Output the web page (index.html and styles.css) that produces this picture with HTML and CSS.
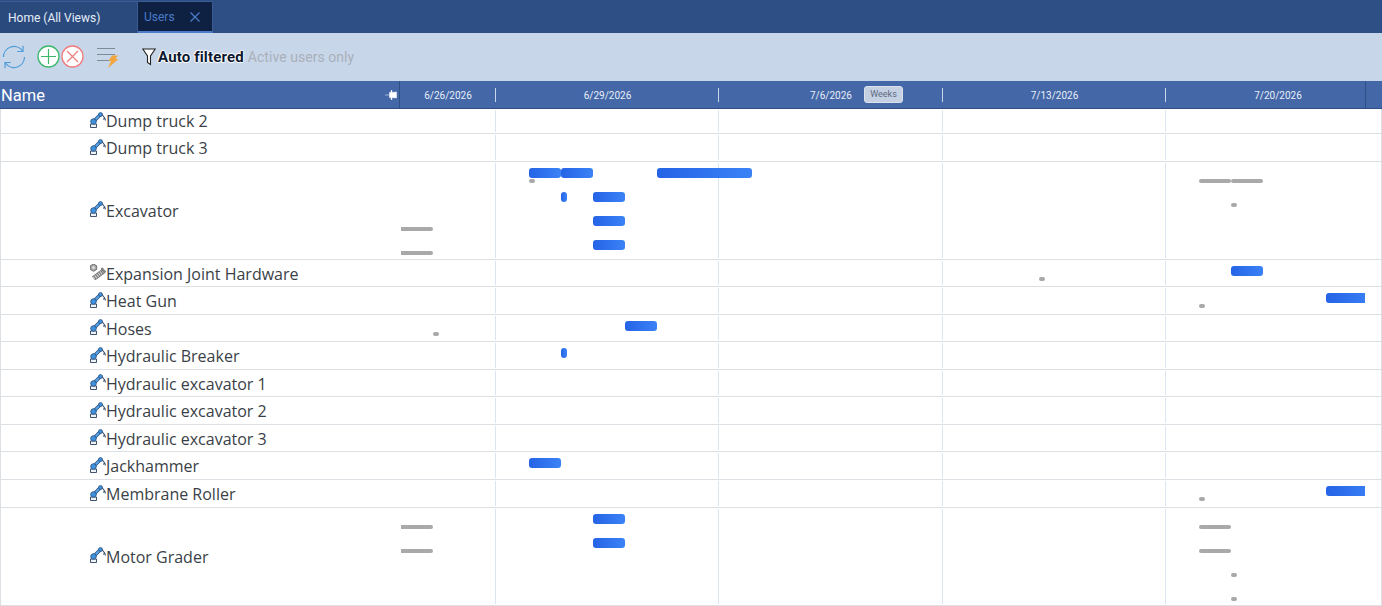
FILE: index.html
```html
<!DOCTYPE html>
<html lang="en">
<head>
    <meta charset="UTF-8">
    <title>Users</title>
    <link rel="stylesheet" href="styles.css">
</head>
<body>
    <svg class="sprites" width="0" height="0">
        <symbol id="arm" viewBox="0 0 16 16">
            <!-- base -->
            <path d="M.5 15.500v-3.500h6v3.500z" fill="#eef3f8" stroke="#2b3f5c" stroke-width=".9"/>
            <!-- arm links, dark outline under a blue fill -->
            <path d="M3.500 9.500L10.500 2.500" fill="none" stroke="#2a4a78" stroke-width="3.400"/>
            <path d="M3.500 9.500L10.500 2.500" fill="none" stroke="#55a5ea" stroke-width="2"/>
            <circle cx="3.500" cy="9.500" r="2.800" fill="#3f93de" stroke="#2a4a78" stroke-width=".8"/>
            <circle cx="10.500" cy="2.500" r="2" fill="#3f93de" stroke="#2a4a78" stroke-width=".7"/>
            <!-- gripper -->
            <path d="M12 2.500l3 4M15 6.500l-2 .8M15 6.500l.4 2" fill="none" stroke="#3a4f6c" stroke-width="1.100"/>
        </symbol>
        <symbol id="bolt" viewBox="0 0 16 16">
            <path d="M3.500 0l3.200 1.800v3.700l-3.200 1.800L.3 5.500V1.800z" fill="#a8a8a8" stroke="#5b5b5b" stroke-width=".8"/>
            <circle cx="3.500" cy="3.600" r="1.200" fill="#eee"/>
            <path d="M3.500 14.500L13 7.500" fill="none" stroke="#6a6a6a" stroke-width="5"/>
            <path d="M3.500 14.500L13 7.500" fill="none" stroke="#cfcfcf" stroke-width="3.600" stroke-dasharray="1.300 .9"/>
            <path d="M11 5l3.500 4 1.300-1.200-3.500-4z" fill="#8b8b8b" stroke="#5b5b5b" stroke-width=".7"/>
        </symbol>
    </svg>

    <div class="tabs">
        <div class="tab">Home (All Views)</div>
        <div class="tab active">
            <span>Users</span>
            <svg class="tab-close" width="12" height="12" viewBox="0 0 12 12"><path d="M1.500 1.500l9 9M10.500 1.500l-9 9" stroke="#4a7cc9" stroke-width="1.200" fill="none"/></svg>
        </div>
    </div>

    <div class="toolbar">
        <svg class="tool-refresh" width="24" height="24" viewBox="0 0 24 24" fill="none" stroke="#4d9bd8" stroke-width="1.200">
            <path d="M1.500 12A10.500 10.500 0 0 1 20.500 5.800M22.500 12A10.500 10.500 0 0 1 3.500 18.200"/>
            <path d="M21 .8v5.700h-5.700M3 23.200v-5.700h5.700"/>
        </svg>
        <svg class="tool-add" width="23" height="23" viewBox="0 0 23 23" fill="#fff">
            <circle cx="11.500" cy="11.500" r="10.500" stroke="#3cb86c" stroke-width="1.300"/>
            <path d="M11.500 4v15M4 11.500h15" stroke="#3cb86c" stroke-width="1.200"/>
        </svg>
        <svg class="tool-remove" width="23" height="23" viewBox="0 0 23 23" fill="#fff">
            <circle cx="11.500" cy="11.500" r="10.500" stroke="#ef7d7d" stroke-width="1.300"/>
            <path d="M6 6l11 11M17 6L6 17" stroke="#ef7d7d" stroke-width="1.200"/>
        </svg>
        <svg class="tool-rules" width="24" height="22" viewBox="0 0 24 22" fill="none">
            <path d="M1 1.500h18M1 7.500h18M1 13.500h12" stroke="#7f8a99" stroke-width="1.200"/>
            <path d="M16 8.500h6l-2.500 3.500h3L12 21l3-7h-2.500z" fill="#f0a63c"/>
        </svg>
        <svg class="tool-filter" width="14" height="18" viewBox="0 0 14 18">
            <path d="M.8 1h12.400L8.500 8v8.500l-3-2V8z" fill="#fff" stroke="#222" stroke-width="1.100"/>
        </svg>
        <span class="filter-label">Auto filtered</span>
        <span class="filter-note">Active users only</span>
    </div>

    <div class="gantt">
        <div class="gantt-head">
            <div class="head-name">
                <span>Name</span>
                <svg class="pin" width="12" height="10" viewBox="0 0 12 10"><path d="M0 5h4.500M4.500 2.500H6V.5h1v2l4.500-.5v6L7 7.500v2H6v-2H4.500z" fill="#fff" stroke="#fff" stroke-width=".5"/></svg>
            </div>
            <div class="head-dates">
                <div class="date date-first">6/26/2026</div>
                <div class="date date-a">6/29/2026</div>
                <div class="date date-b">7/6/2026<span class="zoom-badge">Weeks</span></div>
                <div class="date date-a">7/13/2026</div>
                <div class="date date-b date-last">7/20/2026</div>
            </div>
            <div class="head-end"></div>
        </div>

        <div class="row"><div class="name"><svg class="res-icon"><use href="#arm"/></svg>Dump truck 2</div><div class="chart"></div></div>
        <div class="row"><div class="name"><svg class="res-icon"><use href="#arm"/></svg>Dump truck 3</div><div class="chart"></div></div>
        <div class="row row-tall">
            <div class="name"><svg class="res-icon"><use href="#arm"/></svg>Excavator</div>
            <div class="chart">
                <i class="bar" style="left:129px;top:6px;width:32px"></i>
                <i class="bar" style="left:161px;top:6px;width:32px"></i>
                <i class="bar" style="left:257px;top:6px;width:95px"></i>
                <i class="dot" style="left:129px;top:17px"></i>
                <i class="bar" style="left:161px;top:30px;width:6px"></i>
                <i class="bar" style="left:193px;top:30px;width:32px"></i>
                <i class="bar" style="left:193px;top:54px;width:32px"></i>
                <i class="bar" style="left:193px;top:78px;width:32px"></i>
                <i class="line" style="left:1px;top:65px"></i>
                <i class="line" style="left:1px;top:89px"></i>
                <i class="line round" style="left:799px;top:17px"></i>
                <i class="line round" style="left:831px;top:17px"></i>
                <i class="dot" style="left:831px;top:41px"></i>
            </div>
        </div>
        <div class="row">
            <div class="name"><svg class="res-icon"><use href="#bolt"/></svg>Expansion Joint Hardware</div>
            <div class="chart">
                <i class="bar" style="left:831px;top:6px;width:32px"></i>
                <i class="dot" style="left:639px;top:17px"></i>
            </div>
        </div>
        <div class="row">
            <div class="name"><svg class="res-icon"><use href="#arm"/></svg>Heat Gun</div>
            <div class="chart">
                <i class="bar" style="left:926px;top:6px;width:48px"></i>
                <i class="dot" style="left:799px;top:17px"></i>
            </div>
        </div>
        <div class="row">
            <div class="name"><svg class="res-icon"><use href="#arm"/></svg>Hoses</div>
            <div class="chart">
                <i class="bar" style="left:225px;top:6px;width:32px"></i>
                <i class="dot" style="left:33px;top:17px"></i>
            </div>
        </div>
        <div class="row">
            <div class="name"><svg class="res-icon"><use href="#arm"/></svg>Hydraulic Breaker</div>
            <div class="chart"><i class="bar" style="left:161px;top:6px;width:6px"></i></div>
        </div>
        <div class="row"><div class="name"><svg class="res-icon"><use href="#arm"/></svg>Hydraulic excavator 1</div><div class="chart"></div></div>
        <div class="row"><div class="name"><svg class="res-icon"><use href="#arm"/></svg>Hydraulic excavator 2</div><div class="chart"></div></div>
        <div class="row"><div class="name"><svg class="res-icon"><use href="#arm"/></svg>Hydraulic excavator 3</div><div class="chart"></div></div>
        <div class="row">
            <div class="name"><svg class="res-icon"><use href="#arm"/></svg>Jackhammer</div>
            <div class="chart"><i class="bar" style="left:129px;top:6px;width:32px"></i></div>
        </div>
        <div class="row">
            <div class="name"><svg class="res-icon"><use href="#arm"/></svg>Membrane Roller</div>
            <div class="chart">
                <i class="bar" style="left:926px;top:6px;width:48px"></i>
                <i class="dot" style="left:799px;top:17px"></i>
            </div>
        </div>
        <div class="row row-tall">
            <div class="name"><svg class="res-icon"><use href="#arm"/></svg>Motor Grader</div>
            <div class="chart">
                <i class="bar" style="left:193px;top:6px;width:32px"></i>
                <i class="bar" style="left:193px;top:30px;width:32px"></i>
                <i class="line" style="left:1px;top:17px"></i>
                <i class="line" style="left:1px;top:41px"></i>
                <i class="line round" style="left:799px;top:17px"></i>
                <i class="line round" style="left:799px;top:41px"></i>
                <i class="dot" style="left:831px;top:65px"></i>
                <i class="dot" style="left:831px;top:89px"></i>
            </div>
        </div>
    </div>
</body>
</html>
```

FILE: styles.css
```css
* {
    margin: 0;
    padding: 0;
    box-sizing: border-box;
}

html, body {
    height: 100%;
}

body {
    font-family: Roboto, "Liberation Sans", sans-serif;
    background: #fff;
    overflow: hidden;
}

.sprites {
    position: absolute;
}

/* Tab strip */
.tabs {
    height: 33px;
    background: #2d4f86;
    display: flex;
    padding-top: 1px;
}

.tab {
    width: 138px;
    padding-left: 8px;
    display: flex;
    align-items: center;
    gap: 14px;
    font-size: 12px;
    color: #e6edf7;
    background: #2a4a7e;
    border: 1px solid #3a5c94;
    border-bottom: 0;
    border-left: 0;
}

.tab.active {
    width: 75px;
    padding-left: 6px;
    color: #4a7cc9;
    background: #0f2143;
    border-bottom: 2px solid #4a7cc9;
    border-right-color: #3a5c94;
}

/* Toolbar */
.toolbar {
    height: 48px;
    background: #c8d6e9;
    display: flex;
    align-items: center;
    padding-bottom: 1px;
}

.tool-refresh {
    margin-left: 2px;
}

.tool-add {
    margin-left: 11px;
}

.tool-remove {
    margin-left: 1px;
}

.tool-rules {
    margin-left: 12px;
    margin-top: 3px;
}

.tool-filter {
    margin-left: 22px;
    margin-top: 1px;
}

.filter-label {
    margin-left: 2px;
    font-size: 15px;
    font-weight: 700;
    letter-spacing: .15px;
    color: #0c1830;
    text-shadow: 1px 0 1px #fff, -1px 0 1px #fff, 0 1px 1px #fff, 0 -1px 1px #fff;
}

.filter-note {
    margin-left: 4px;
    font-size: 14px;
    letter-spacing: .05px;
    color: #a9b0ba;
}

/* Gantt header */
.gantt-head {
    height: 28px;
    background: #4467a8;
    border-bottom: 1px solid #2d4f86;
    display: flex;
    color: #fff;
}

.head-name {
    width: 400px;
    flex: none;
    display: flex;
    align-items: center;
    justify-content: space-between;
    padding: 2px 2px 0 1px;
    font-size: 16.500px;
    border-right: 1px solid #2d4f86;
}

.head-dates {
    width: 966px;
    flex: none;
    display: flex;
    overflow: hidden;
    font-size: 10px;
    color: #e9eff8;
    border-right: 1px solid #2d4f86;
}

.head-end {
    flex: 1;
}

.pin {
    margin-top: -2px;
}

.date {
    position: relative;
    flex: none;
    display: flex;
    align-items: center;
    justify-content: center;
    padding-top: 1px;
}

.date::after {
    content: "";
    position: absolute;
    right: 0;
    top: 7px;
    height: 14px;
    border-right: 1px solid #c8d6e9;
}

.date-first { width: 96px; }
.date-a { width: 223px; }
.date-b { width: 224px; }
.date-last::after { display: none; }

.zoom-badge {
    position: absolute;
    left: 145px;
    top: 5px;
    width: 39px;
    height: 17px;
    line-height: 15px;
    text-align: center;
    font-size: 9px;
    color: #5d6a80;
    background: #c5d0e3;
    border: 1px solid #dbe2ee;
    border-radius: 3px;
}

/* Rows */
.row {
    height: 27.500px;
    display: flex;
    border: 1px solid #dcdfe3;
    border-top: 0;
}

.gantt-head + .row {
    height: 25px;
}

.row:nth-last-child(2) {
    height: 28.500px;
}

.row-tall {
    height: 98px;
}

.name {
    width: 399px;
    flex: none;
    display: flex;
    align-items: center;
    padding: 1.500px 0 0 89px;
    font-family: "Open Sans", sans-serif;
    font-size: 16px;
    color: #3a3f47;
}

.gantt-head + .row .name,
.row:last-child .name {
    padding-top: 0;
}

.res-icon {
    width: 16px;
    height: 16px;
    flex: none;
    margin-top: -3px;
}

/* Timeline cells, the gridlines stop short of the row borders */
.chart {
    width: 965px;
    position: relative;
    overflow: hidden;
    background:
        linear-gradient(#dce6f2, #dce6f2) 95px 1px / 1px calc(100% - 2px) no-repeat,
        linear-gradient(#dce6f2, #dce6f2) 318px 1px / 1px calc(100% - 2px) no-repeat,
        linear-gradient(#dce6f2, #dce6f2) 542px 1px / 1px calc(100% - 2px) no-repeat,
        linear-gradient(#dce6f2, #dce6f2) 765px 1px / 1px calc(100% - 2px) no-repeat;
}

.bar {
    position: absolute;
    height: 10px;
    border-radius: 3px;
    background: linear-gradient(90deg, #2563e6, #3b82f6);
}

.line {
    position: absolute;
    width: 32px;
    height: 4px;
    border-radius: 0 2px 2px 0;
    background: #a9a9a9;
}

.line.round {
    border-radius: 2px;
}

.dot {
    position: absolute;
    width: 6px;
    height: 4px;
    border-radius: 2px;
    background: #a9a9a9;
}
```
